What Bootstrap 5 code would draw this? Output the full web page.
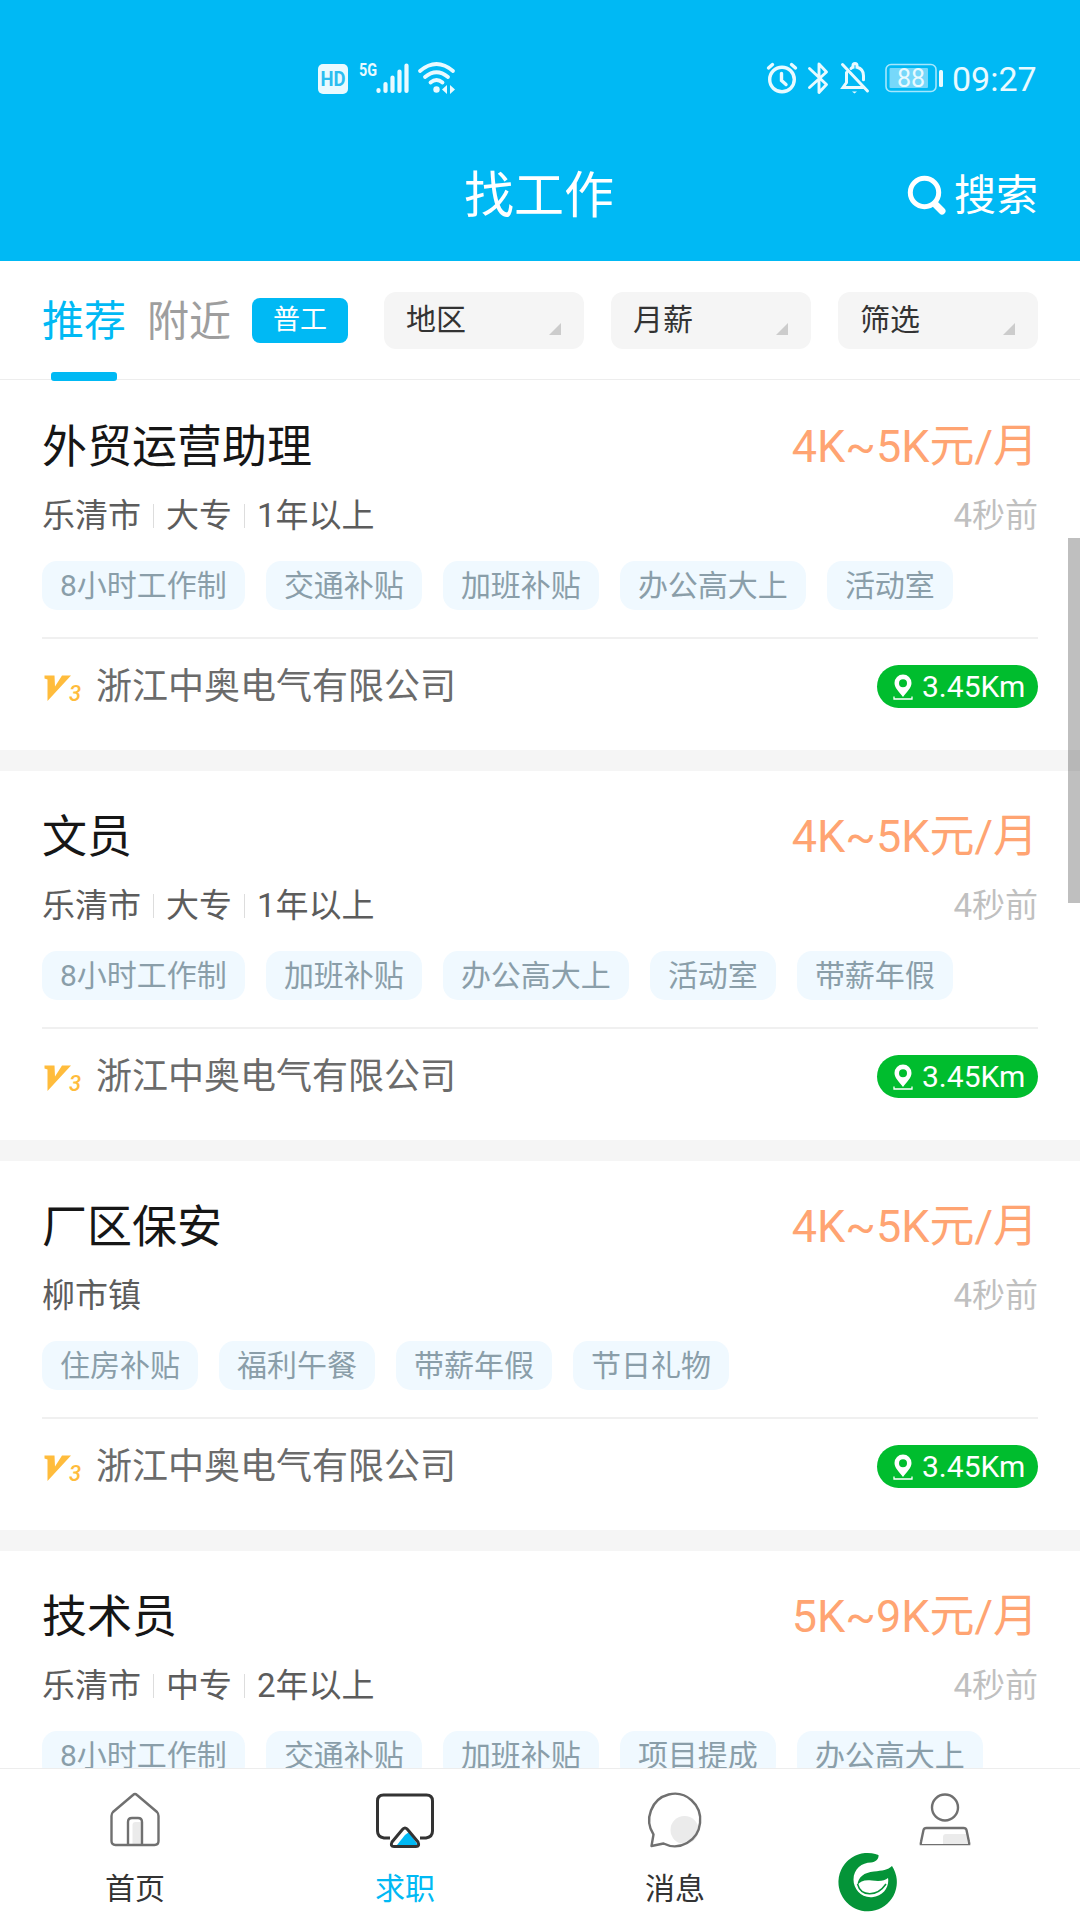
<!DOCTYPE html>
<html lang="zh-CN">
<head>
<meta charset="utf-8">
<meta name="viewport" content="width=device-width, initial-scale=1">
<title>找工作</title>
<link href="https://cdn.jsdelivr.net/npm/bootstrap@5.3.0/dist/css/bootstrap.min.css" rel="stylesheet">
<style>
  body { font-family: Roboto, "Noto Sans CJK SC", sans-serif; font-size: 30px; line-height: 1; color: #333; background: #fff; }
  svg { display: block; flex: none; overflow: visible; }
  .screen { width: 1080px; height: 1920px; }
  .app-head { height: 261px; background: #00b9f4; color: #fff; }
  .status-line { height: 156px; padding: 0 42px 0 318px; color: #e9faff; }
  .net-5g { font-size: 18px; font-weight: 700; transform: scaleX(.8); transform-origin: left; width: 17px; margin: -16px 0 0 11px; }
  .clock { font-size: 34px; margin-left: 8px; width: 86px; padding-top: 2px; }
  .title-row { height: 78px; padding: 2px 42px 0; }
  .page-title { font-size: 50px; font-weight: 400; padding-right: 2px; }
  .title-row .side { flex: 1 1 0; }
  .search-link { font-size: 42px; gap: 7px; }
  .filters { height: 119px; padding: 0 42px; border-bottom: 1px solid #ededed; }
  .tab-item { font-size: 42px; color: #9e9e9e; height: 118px; line-height: 122px; margin-right: 21px; }
  .tab-item.active { color: #00b9f4; }
  .tab-item.active::after { content: ""; position: absolute; left: 9px; bottom: -2px; width: 66px; height: 9px; border-radius: 3px; background: #00b9f4; }
  .btn-kind { width: 96px; height: 45px; border-radius: 8px; background: #00b9f4; color: #fff; font-size: 27px; margin-right: 36px; padding-top: 1px; }
  .pick { width: 200px; height: 57px; border-radius: 12px; background: #f5f5f5; padding: 0 23px 14px 22px; }
  .pick span { align-self: center; padding-top: 14px; }
  .job { height: 370px; padding: 41px 42px 0; }
  .job + .job { border-top: 21px solid #f5f5f5; height: 390px; padding-top: 40px; }
  .job-name { font-size: 45px; line-height: 53px; height: 54px; color: #161616; font-weight: 400; }
  .pay { font-size: 45px; line-height: 51px; color: #ffa472; }
  .meta { font-size: 33px; line-height: 38px; height: 40px; margin-top: 21px; color: #5c5c5c; }
  .meta .bar { width: 1px; height: 24px; background: #ddd; margin: 0 12px; }
  .ago { color: #c0c0c0; }
  .tags { gap: 21px; margin-top: 25px; }
  .perk { height: 49px; line-height: 50px; padding: 0 18px; border-radius: 15px; background: #f0f9ff; color: #8a9ea9; font-size: 30px; }
  .firm { border-top: 2px solid #f0f0f0; margin-top: 27px; height: 97px; font-size: 36px; color: #6b6b6b; }
  .firm .vip { margin-right: 12px; }
  .dist { width: 161px; height: 43px; border-radius: 22px; background: #00bd2e; color: #fff; font-size: 30px; padding-left: 16px; gap: 9px; }
  .scroll-thumb { right: 0; top: 538px; width: 12px; height: 365px; background: rgba(0,0,0,.25); }
  .tabbar { height: 152px; border-top: 1px solid #ededed; background: #fff; color: #333; }
  .tabbar a { width: 270px; color: inherit; padding-top: 23px; gap: 26px; }
  .tabbar a.on { color: #00b9f4; }
  .leaf { left: 838px; top: 1852px; }
</style>
<script src="https://cdn.jsdelivr.net/npm/bootstrap@5.3.0/dist/js/bootstrap.bundle.min.js"></script>
</head>
<body>
<svg width="0" height="0" class="position-absolute">
  <symbol id="vip" viewBox="0 0 42 32">
    <path d="M2.500 4.500h10l.5 11L20 4.500h9L5.500 30V8.500L2.500 7.500z" fill="#ffbc3c"/>
    <text x="27" y="29.500" font-family="Roboto" font-size="22" font-weight="500" font-style="italic" fill="#ffbc3c">3</text>
  </symbol>
  <symbol id="pin" viewBox="0 0 20 26">
    <path fill="#fff" fill-rule="evenodd" d="M10 .5a8.500 8.500 0 0 1 8.500 8.500c0 5-4.500 8.500-8.500 14C6 17.500 1.500 14 1.500 9A8.500 8.500 0 0 1 10 .5zm0 4.700a4 4 0 1 0 0 8 4 4 0 0 0 0-8z"/>
    <path d="M1 22.500v2.500h18v-2.500" fill="none" stroke="#fff" stroke-width="1.300"/>
  </symbol>
</svg>
<div class="screen position-relative overflow-hidden d-flex flex-column">
  <header class="app-head flex-shrink-0">
    <div class="status-line d-flex align-items-center">
      <svg width="30" height="30" viewBox="0 0 30 30"><rect y="1" width="30" height="30" rx="5" fill="#e9faff"/><text x="15" y="23" text-anchor="middle" textLength="25" lengthAdjust="spacingAndGlyphs" font-family="Roboto" font-weight="700" font-size="20" fill="#2bbdf0">HD</text></svg>
      <span class="net-5g">5G</span>
      <svg width="34" height="32" viewBox="0 0 34 32" stroke="#e9faff" stroke-width="4.200" stroke-linecap="round"><path d="M2.500 28v1M9.500 22v7M16.500 15.500V29M23.500 9.500V29M30.500 3.500V29"/></svg>
      <svg class="ms-2" width="38" height="32" viewBox="0 0 38 32" fill="none" stroke="#e9faff" stroke-width="3.800" stroke-linecap="round"><path d="M2 9q16.500-14 33 0M7 15q11.500-9.500 23 0M12.500 20.500q6-5 12 0"/><circle cx="18.500" cy="27.500" r="3.200" fill="#e9faff" stroke="none"/><path d="M24 27.500l5-4.500v9zM37 27.500l-5-4.500v9z" fill="#e9faff" stroke="none"/></svg>
      <div class="d-flex align-items-center ms-auto">
        <svg width="32" height="32" viewBox="0 0 32 32" fill="none" stroke="#e9faff" stroke-width="3.400" stroke-linecap="round"><circle cx="16" cy="17.500" r="12.300"/><path d="M15.500 11.500v7l4.500 4M2.500 6l4-3.500M29.500 6l-4-3.500"/></svg>
        <svg width="20" height="32" viewBox="0 0 20 32" fill="none" stroke="#e9faff" stroke-width="2.900" stroke-linejoin="round" stroke-linecap="round" style="margin-left:10px"><path d="M1.500 6.500L18.500 22.500l-7.500 8V2l7.500 8L1.500 25.500"/></svg>
        <svg width="30" height="32" viewBox="0 0 30 32" fill="none" stroke="#e9faff" stroke-width="3" stroke-linecap="round" style="margin-left:12px"><path d="M2.500 2.500L27.500 29M6.500 10.500v10L3 25.500h20M11 6.500q1-1 2-1.200V3.500a2 2 0 0 1 4 0v1.800c4 1 6.500 4 6.500 8.500v4"/><path d="M12 29.500h5l-2.500 2z" fill="#e9faff" stroke="none"/></svg>
        <svg width="59" height="30" viewBox="0 0 59 30" style="margin-left:15px"><rect x="1" y="1.500" width="50" height="27" rx="5" fill="none" stroke="#a5e7fd" stroke-width="1.600"/><rect x="4.500" y="5" width="38.500" height="20" rx="1" fill="#76d8fa"/><rect x="54" y="7" width="4" height="17" rx="1.500" fill="#e9faff"/><text x="26" y="24" text-anchor="middle" font-family="Roboto" font-size="25" fill="#e9faff">88</text></svg>
        <span class="clock">09:27</span>
      </div>
    </div>
    <div class="title-row d-flex align-items-center">
      <div class="side"></div>
      <h1 class="page-title m-0">找工作</h1>
      <div class="side d-flex justify-content-end">
        <a class="search-link d-flex align-items-center text-white text-decoration-none" href="#">
          <svg width="40" height="40" viewBox="0 0 40 40" fill="none" stroke="#fff" stroke-linecap="round"><circle cx="17.500" cy="16.500" r="14.200" stroke-width="5"/><path d="M28.500 28.500l6.500 6.500" stroke-width="7"/></svg>搜索</a>
      </div>
    </div>
  </header>

  <nav class="filters d-flex align-items-center flex-shrink-0">
    <span class="tab-item active position-relative">推荐</span>
    <span class="tab-item">附近</span>
    <span class="btn-kind d-flex align-items-center justify-content-center">普工</span>
    <div class="d-flex flex-grow-1 justify-content-between">
      <div class="pick d-flex justify-content-between align-items-end"><span>地区</span><svg width="12" height="12"><path d="M12 0v12H0z" fill="#ccc"/></svg></div>
      <div class="pick d-flex justify-content-between align-items-end"><span>月薪</span><svg width="12" height="12"><path d="M12 0v12H0z" fill="#ccc"/></svg></div>
      <div class="pick d-flex justify-content-between align-items-end"><span>筛选</span><svg width="12" height="12"><path d="M12 0v12H0z" fill="#ccc"/></svg></div>
    </div>
  </nav>

  <main class="flex-grow-1 overflow-hidden" style="min-height:0">
    <article class="job">
      <div class="d-flex justify-content-between"><h2 class="job-name m-0">外贸运营助理</h2><span class="pay">4K~5K元/月</span></div>
      <div class="meta d-flex align-items-center"><span>乐清市</span><i class="bar"></i><span>大专</span><i class="bar"></i><span>1年以上</span><span class="ago ms-auto">4秒前</span></div>
      <div class="tags d-flex"><span class="perk">8小时工作制</span><span class="perk">交通补贴</span><span class="perk">加班补贴</span><span class="perk">办公高大上</span><span class="perk">活动室</span></div>
      <div class="firm d-flex align-items-center"><svg class="vip" width="42" height="32"><use href="#vip"/></svg><span>浙江中奥电气有限公司</span><span class="dist d-flex align-items-center ms-auto"><svg width="20" height="26"><use href="#pin"/></svg>3.45Km</span></div>
    </article>
    <article class="job">
      <div class="d-flex justify-content-between"><h2 class="job-name m-0">文员</h2><span class="pay">4K~5K元/月</span></div>
      <div class="meta d-flex align-items-center"><span>乐清市</span><i class="bar"></i><span>大专</span><i class="bar"></i><span>1年以上</span><span class="ago ms-auto">4秒前</span></div>
      <div class="tags d-flex"><span class="perk">8小时工作制</span><span class="perk">加班补贴</span><span class="perk">办公高大上</span><span class="perk">活动室</span><span class="perk">带薪年假</span></div>
      <div class="firm d-flex align-items-center"><svg class="vip" width="42" height="32"><use href="#vip"/></svg><span>浙江中奥电气有限公司</span><span class="dist d-flex align-items-center ms-auto"><svg width="20" height="26"><use href="#pin"/></svg>3.45Km</span></div>
    </article>
    <article class="job">
      <div class="d-flex justify-content-between"><h2 class="job-name m-0">厂区保安</h2><span class="pay">4K~5K元/月</span></div>
      <div class="meta d-flex align-items-center"><span>柳市镇</span><span class="ago ms-auto">4秒前</span></div>
      <div class="tags d-flex"><span class="perk">住房补贴</span><span class="perk">福利午餐</span><span class="perk">带薪年假</span><span class="perk">节日礼物</span></div>
      <div class="firm d-flex align-items-center"><svg class="vip" width="42" height="32"><use href="#vip"/></svg><span>浙江中奥电气有限公司</span><span class="dist d-flex align-items-center ms-auto"><svg width="20" height="26"><use href="#pin"/></svg>3.45Km</span></div>
    </article>
    <article class="job">
      <div class="d-flex justify-content-between"><h2 class="job-name m-0">技术员</h2><span class="pay">5K~9K元/月</span></div>
      <div class="meta d-flex align-items-center"><span>乐清市</span><i class="bar"></i><span>中专</span><i class="bar"></i><span>2年以上</span><span class="ago ms-auto">4秒前</span></div>
      <div class="tags d-flex"><span class="perk">8小时工作制</span><span class="perk">交通补贴</span><span class="perk">加班补贴</span><span class="perk">项目提成</span><span class="perk">办公高大上</span></div>
    </article>
  </main>

  <nav class="tabbar d-flex flex-shrink-0">
    <a class="d-flex flex-column align-items-center text-decoration-none" href="#">
      <svg width="60" height="56" viewBox="0 0 60 56" fill="none" stroke="#707070" stroke-width="2.400"><path d="M27.500 53V33q0-3 3-3h6v23z" fill="#ebebeb" stroke="none"/><path d="M23 53V30q0-4 4-4h6q4 0 4 4v23M28 3q2-1.800 4 0l20 17q1.500 1.500 1.500 4v25q0 4-4 4h-39q-4 0-4-4V24q0-2.500 1.500-4z"/></svg>
      <span>首页</span></a>
    <a class="on d-flex flex-column align-items-center text-decoration-none" href="#">
      <svg width="60" height="56" viewBox="0 0 60 56" fill="none" stroke="#333" stroke-width="3" stroke-linejoin="round"><path d="M15 46H9q-6.500-1-6.500-7V9Q2.500 3 8.500 3h43q6 0 6 6v30q0 6-6.500 7h-6"/><path d="M22 53l8-10 4-3 9.500 14z" fill="#00b9f4" stroke="none"/><path d="M27 38q3-4 6 0l10 12q2 4.500-2 4.500h-22q-4 0-2-4.500z"/></svg>
      <span>求职</span></a>
    <a class="d-flex flex-column align-items-center text-decoration-none" href="#">
      <svg width="60" height="56" viewBox="0 0 60 56" fill="none" stroke="#707070" stroke-width="2.400" stroke-linejoin="round"><circle cx="39.500" cy="38" r="14" fill="#ebebeb" stroke="none"/><path d="M8.500 42.500A25.500 26.200 0 1 1 18.500 51.500L6.500 54z"/></svg>
      <span>消息</span></a>
    <a class="d-flex flex-column align-items-center text-decoration-none" href="#">
      <svg width="60" height="56" viewBox="0 0 60 56" fill="none" stroke="#707070" stroke-width="2.400"><path d="M28 52V45q0-3 3-3h20l2 10z" fill="#ebebeb" stroke="none"/><circle cx="30" cy="15.500" r="13"/><path d="M6 53q-.5-1 0-3l2.500-12q.5-2 3-2h37q2.500 0 3 2L54 50q.5 2 0 3"/><path d="M6 52.700h48" stroke-width="1.200"/></svg>
    </a>
  </nav>
  <div class="scroll-thumb position-absolute"></div>
  <svg class="leaf position-absolute" width="59" height="59" viewBox="0 0 59 59"><path fill="#049438" d="M40.500 3A29.200 29.200 0 1 0 54 14C50 18 44 18.500 36 19.500 26 20.500 20 25 19.500 33 22 29 27 27.500 34 28.500 41 29.500 47 29 50 26c1.500 8-4 18-16 19.200C23 46 15.500 37 15.500 27.500 15.500 17 24 10.500 33 10.500 38 10 41 7 40.500 3z"/><path fill="none" stroke="#049438" stroke-width="1.500" d="M19.500 32C23 45 39 45 48 32"/></svg>
</div>
</body>
</html>
